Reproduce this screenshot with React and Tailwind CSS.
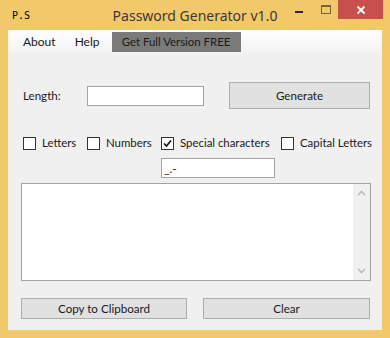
import { useState } from 'react'

const UI_FONT = { fontFamily: 'Lato, "Liberation Sans", Arial, sans-serif' }

function Check({ checked, label, onChange, className = '' }) {
  return (
    <label className={`flex items-center gap-[6px] cursor-default whitespace-nowrap ${className}`} onClick={onChange}>
      <span className="w-[13px] h-[13px] shrink-0 bg-white border border-[#333333] flex items-center justify-center">
        {checked && (
          <svg width="9" height="9" viewBox="0 0 9 9">
            <path d="M1 4.5 L3.5 7 L8 1.5" fill="none" stroke="#111" strokeWidth="1.6" />
          </svg>
        )}
      </span>
      <span className="text-[11.4px] text-[#1a1a1a]">{label}</span>
    </label>
  )
}

function WinButton({ children, className = '' }) {
  return (
    <button
      className={`bg-[#e1e1e1] border border-[#adadad] text-[11.6px] text-[#1a1a1a] flex items-center justify-center ${className}`}
    >
      {children}
    </button>
  )
}

export default function App() {
  const [opts, setOpts] = useState({ letters: false, numbers: false, special: true, capital: false })
  const toggle = (k) => setOpts((o) => ({ ...o, [k]: !o[k] }))

  return (
    <div className="w-[390px] h-[338px] bg-[#f1c96a] flex flex-col" style={UI_FONT}>
      {/* title bar */}
      <div className="h-[30px] flex items-start relative">
        <div className="pl-[12px] pt-[8px] text-[10px] text-black" style={{ fontFamily: '"DejaVu Sans Mono", monospace' }}>
          P.S
        </div>
        <div className="absolute left-0 right-0 top-[5px] text-center text-[14px] text-[#3a3a3a]" style={{ fontFamily: '"Noto Sans", sans-serif' }}>
          Password Generator v1.0
        </div>
        <div className="ml-auto flex items-start">
          <div className="w-[8px] h-[2px] bg-[#2a2a2a] mt-[11px]" />
          <div className="w-[10px] h-[9px] border border-[#7a6334] border-t-2 mt-[5px] ml-[18px]" />
          <div className="w-[45px] h-[19px] bg-[#c7504f] ml-[7px] mr-[7px] flex items-center justify-center">
            <svg width="10" height="10" viewBox="0 0 10 10">
              <path d="M1.5 1.5 L8.5 8.5 M8.5 1.5 L1.5 8.5" stroke="#fff" strokeWidth="1.8" />
            </svg>
          </div>
        </div>
      </div>

      {/* client area */}
      <div className="mx-[8px] h-[300px] bg-[#f0f0f0] flex flex-col">
        <div className="h-[24px] bg-gradient-to-b from-[#ffffff] to-[#f2f2f2] flex items-center pl-[2px] text-[12px] text-[#1a1a1a] whitespace-nowrap">
          <span className="px-[13px] py-[3px]">About</span>
          <span className="px-[6px] py-[3px]">Help</span>
          <span className="ml-[6px] h-[20px] w-[129px] bg-[#7a7a7a] flex items-center justify-center text-[11.4px] text-[#1a1a1a]">
            Get Full Version FREE
          </span>
        </div>

        <div className="mt-[28px] h-[27px] flex items-center pl-[15px]">
          <span className="w-[64px] text-[11.6px] text-[#1a1a1a]">Length:</span>
          <input className="block w-[117px] h-[20px] bg-white border border-[#a3a3a3] outline-none px-1 text-[12px]" />
          <WinButton className="ml-[25px] w-[141px] h-[27px]">Generate</WinButton>
        </div>

        <div className="mt-[26px] h-[16px] flex items-center pl-[15px]">
          <Check className="w-[64px]" checked={opts.letters} label="Letters" onChange={() => toggle('letters')} />
          <Check className="w-[74px]" checked={opts.numbers} label="Numbers" onChange={() => toggle('numbers')} />
          <Check className="w-[120px]" checked={opts.special} label="Special characters" onChange={() => toggle('special')} />
          <Check checked={opts.capital} label="Capital Letters" onChange={() => toggle('capital')} />
        </div>

        <div className="mt-[7px] pl-[153px] flex">
          <input
            defaultValue="_.-"
            className="block w-[114px] h-[20px] bg-white border border-[#a3a3a3] outline-none px-[2px] text-[12px] text-[#1a1a1a]"
          />
        </div>

        <div className="mt-[5px] ml-[13px] w-[350px] h-[98px] bg-white border border-[#a3a3a3] flex">
          <div className="flex-1" />
          <div className="w-[17px] bg-[#f0f0f0] flex flex-col items-center justify-between py-[6px]">
            <svg width="9" height="6" viewBox="0 0 9 6">
              <path d="M1 5 L4.5 1.5 L8 5" fill="none" stroke="#b5b5b5" strokeWidth="1.3" />
            </svg>
            <svg width="9" height="6" viewBox="0 0 9 6">
              <path d="M1 1 L4.5 4.5 L8 1" fill="none" stroke="#b5b5b5" strokeWidth="1.3" />
            </svg>
          </div>
        </div>

        <div className="mt-[17px] ml-[13px] flex gap-[16px]">
          <WinButton className="w-[166px] h-[21px]">Copy to Clipboard</WinButton>
          <WinButton className="w-[167px] h-[21px]">Clear</WinButton>
        </div>
      </div>
    </div>
  )
}
